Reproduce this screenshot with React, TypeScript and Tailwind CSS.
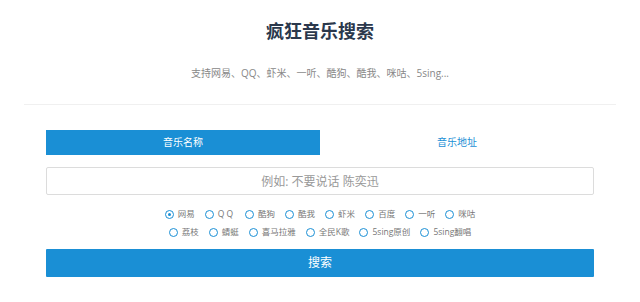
import { useState } from 'react'

const rowOne = ['网易', 'QQ', '酷狗', '酷我', '虾米', '百度', '一听', '咪咕']
const rowTwo = ['荔枝', '蜻蜓', '喜马拉雅', '全民K歌', '5sing原创', '5sing翻唱']

export default function App() {
  const [tab, setTab] = useState('name')
  const [site, setSite] = useState('网易')

  const radio = (name: string) => (
    <label key={name} className="flex items-center gap-[4px] cursor-pointer" onClick={() => setSite(name)}>
      <span className="w-[9px] h-[9px] rounded-full border-[1.5px] border-[#1a8fd5] flex items-center justify-center">
        {site === name && <span className="w-[3px] h-[3px] rounded-full bg-[#1a8fd5]" />}
      </span>
      <span className={name === 'QQ' ? 'tracking-[2px]' : ''}>{name}</span>
    </label>
  )

  return (
    <div className="w-[640px] h-[302px] bg-white overflow-hidden" style={{ fontFamily: '"Open Sans", "Noto Sans CJK SC", sans-serif' }}>
      {/* header */}
      <div className="h-[105px] mx-6 border-b border-[#f0f0f0] flex flex-col items-center">
        <h1 className="mt-[18px] text-[18px] leading-[26px] font-bold text-[#2b384c]">疯狂音乐搜索</h1>
        <p className="mt-[20px] text-[10px] leading-[18px] text-[#888]">支持网易、QQ、虾米、一听、酷狗、酷我、咪咕、5sing...</p>
      </div>

      <div className="w-[548px] mx-auto">
        {/* tabs */}
        <div className="mt-[25px] flex h-[25px] text-[10px]">
          <button
            className={`flex-1 ${tab === 'name' ? 'bg-[#1a8fd5] text-white' : 'text-[#1a8fd5]'}`}
            onClick={() => setTab('name')}
          >
            音乐名称
          </button>
          <button
            className={`flex-1 ${tab === 'url' ? 'bg-[#1a8fd5] text-white' : 'text-[#1a8fd5]'}`}
            onClick={() => setTab('url')}
          >
            音乐地址
          </button>
        </div>

        {/* input */}
        <input
          className="mt-[12px] w-full h-[28px] border border-[#dcdcdc] rounded-[2px] text-center text-[12px] text-[#555] placeholder:text-[#999] outline-none"
          placeholder={tab === 'name' ? '例如: 不要说话 陈奕迅' : '例如: http://music.163.com/#/song?id=25906124'}
        />

        {/* radios */}
        <div className="mt-[10px] flex flex-col items-center text-[8.5px] text-[#777]">
          <div className="h-[18px] flex items-center gap-x-[10px]">{rowOne.map(radio)}</div>
          <div className="h-[18px] flex items-center gap-x-[10px]">{rowTwo.map(radio)}</div>
        </div>

        {/* submit */}
        <button className="mt-[8px] w-full h-[28px] bg-[#1a8fd5] text-white text-[12px] rounded-[1px]">搜索</button>
      </div>
    </div>
  )
}
